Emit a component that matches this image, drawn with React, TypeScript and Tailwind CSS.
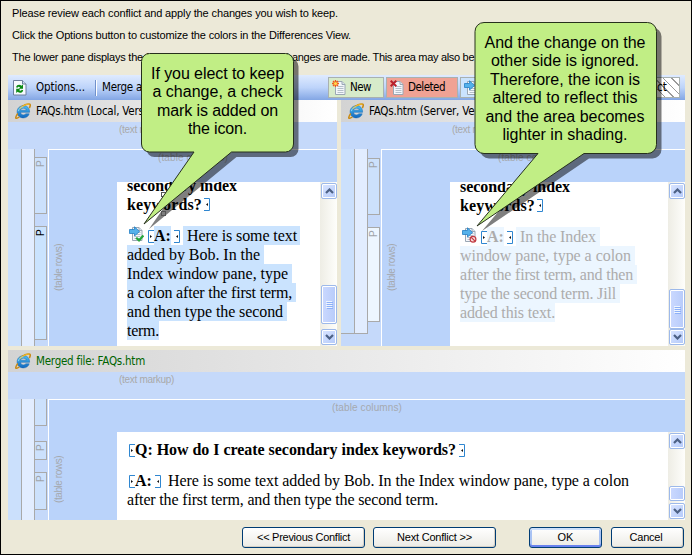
import React, { useLayoutEffect, useRef, useState } from "react";

const TAHOMA = "font-['DejaVu_Sans_Condensed','DejaVu_Sans',sans-serif] text-[11.5px]";
const ARIAL = "font-['Liberation_Sans',Arial,sans-serif]";

/** A run of text whose tracking is adjusted so that it spans `w` pixels. */
function Fit({ w, className = "", children }: { w: number; className?: string; children: string }) {
  const ref = useRef<HTMLSpanElement>(null);
  const [tracking, setTracking] = useState(0);
  useLayoutEffect(() => {
    const el = ref.current;
    if (el) setTracking((w - el.getBoundingClientRect().width) / children.length);
  }, []);
  return (
    <span ref={ref} className={`inline-block shrink-0 whitespace-pre ${className}`} style={{ letterSpacing: `${tracking}px` }}>
      {children}
    </span>
  );
}

function IELogo() {
  return (
    <svg width="16" height="16" viewBox="0 0 16 16" className="shrink-0">
      <defs>
        <linearGradient id="ie" x1="0" y1="0" x2="0" y2="1">
          <stop offset="0" stopColor="#4cc0f4" />
          <stop offset="1" stopColor="#1166bd" />
        </linearGradient>
      </defs>
      <path
        d="M14.600 9.300H5.600c.2 1.800 1.400 2.600 2.900 2.600 1.100 0 1.800-.4 2.300-1.100h3.400c-.8 2.600-2.900 4.100-5.700 4.100-3.800 0-6.400-2.400-6.400-6 0-3.700 2.700-6.200 6.400-6.200 3.900 0 6.300 2.700 6.100 6.600zM11.200 7.200C11.100 5.900 10 5.200 8.500 5.200S5.900 5.900 5.600 7.200z"
        fill="url(#ie)" stroke="#1769b4" strokeWidth=".5"
      />
      <path d="M2.800 10.500C.5 13.600.2 15.500 1.500 15.300c.7-.1 1.800-.7 3-1.600" fill="none" stroke="#c98a14" strokeWidth="1.400" />
      <path d="M4.500 5.800C8 2.300 13 .200 14.700 1.200c.9.600.6 2-.4 3.800" fill="none" stroke="#c98a14" strokeWidth="1.600" />
      <path d="M4.800 5.500C8 2.500 12.700.600 14.400 1.300" fill="none" stroke="#fbc62c" strokeWidth="1" />
      <path d="M3.300 8.200C4 5.500 6 3.900 8.500 3.800" fill="none" stroke="#8fdcfb" strokeWidth=".9" />
    </svg>
  );
}

function RefreshPage() {
  return (
    <svg width="14" height="16" viewBox="0 0 14 16" className="shrink-0">
      <path d="M.5 .5h9l3.500 3.500v11H.5z" fill="#f6f9ff" stroke="#6d7f9e" />
      <path d="M9.500 .5V4H13" fill="#cfdcf2" stroke="#6d7f9e" />
      <path d="M3 7.200c.8-3 4-3.200 5.500-1.400L10 4.500v4.300H5.700l1.400-1.300C6.200 6.400 4.900 6.500 4.500 7.700z" fill="#0c8a14" />
      <path d="M10.200 10.300c-.8 3-4 3.200-5.500 1.400L3.200 13V8.700h4.300L6.100 10c.9 1.100 2.200 1 2.600-.2z" fill="#0c8a14" />
    </svg>
  );
}

type Mark = "new" | "deleted" | "arrow" | "check" | "ignored";

function PageIcon({ mark }: { mark: Mark }) {
  const arrow = mark === "arrow" || mark === "check" || mark === "ignored";
  return (
    <svg width="15" height="16" viewBox="0 0 15 16" className="shrink-0">
      <path d="M3.500 1.500h6.500l3 3v10H3.500z" fill="#f4f7fb" stroke="#9aa7b4" />
      <path d="M10 1.500v3h3" fill="#dbe3ec" stroke="#9aa7b4" />
      <path d="M5.500 6.500h6M5.500 8.500h6M5.500 10.500h6M5.500 12.500h6" stroke="#b4bfca" />
      {mark === "new" && (
        <g>
          <path d="M3.500 0v7M0 3.500h7M1 1l5 5M6 1L1 6" stroke="#ef5b17" strokeWidth="1.300" />
          <circle cx="3.500" cy="3.500" r="1.600" fill="#ffd84a" />
        </g>
      )}
      {mark === "deleted" && <path d="M.7 .8l5.600 5.400M6.300 .8L.7 6.200" stroke="#b91f2b" strokeWidth="2" />}
      {arrow && <path d="M.5 3.500h5V.8L10.500 5.500 5.500 10V7.500h-5z" fill="#55b1ea" stroke="#247fc4" strokeWidth=".8" />}
      {mark === "check" && <path d="M7.200 11.700l2.800 2.700 4.400-5" fill="none" stroke="#25a63a" strokeWidth="2.200" />}
      {mark === "ignored" && (
        <g fill="#f7dede" stroke="#c23a41" strokeWidth="1.200">
          <circle cx="11" cy="12.200" r="2.900" />
          <path d="M9 10.200l4 4" />
        </g>
      )}
    </svg>
  );
}

/** Blue bracket that marks the start or the end of an element. */
function Tag({ end = false, className = "" }: { end?: boolean; className?: string }) {
  return (
    <svg width="6" height="13" viewBox="0 0 6 13" className={`mt-[4px] shrink-0 ${className}`}>
      <path d={end ? "M0 .5h5.500v12H0" : "M6 .5H.5v12H6"} fill="none" stroke="#2f86d0" />
      <path d={end ? "M4 5v3L2 6.500z" : "M2 5v3L4 6.500z"} fill="#111" />
    </svg>
  );
}

function Arrow({ down = false }: { down?: boolean }) {
  return (
    <div className="flex h-[16px] w-[16px] shrink-0 items-center justify-center rounded-[2px] border border-[#9db9ea] bg-linear-to-br from-[#dbe6ff] to-[#b3c9fa] shadow-[inset_0_0_0_1px_#fff]">
      <svg width="9" height="6" viewBox="0 0 9 6">
        <path d={down ? "M1 1l3.500 3.500L8 1" : "M1 5l3.500-3.500L8 5"} fill="none" stroke="#4d6185" strokeWidth="2.200" />
      </svg>
    </div>
  );
}

function ScrollBar({ before, thumb }: { before: string; thumb: string }) {
  return (
    <div className="flex w-[17px] shrink-0 flex-col items-end bg-linear-to-r from-[#eeede5] to-[#fefefb] pt-px pb-px">
      <Arrow />
      <div className={before} />
      <div className={`flex w-[16px] shrink-0 flex-col items-center justify-center gap-px rounded-[2px] border border-[#9db9ea] bg-linear-to-r from-[#cbd9ff] to-[#b7cbfa] shadow-[inset_0_0_0_1px_#fff] ${thumb}`}>
        {thumb !== "h-[15px]" && [0, 1, 2, 3].map((i) => <div key={i} className="h-px w-[6px] bg-[#eef4fe] shadow-[1px_1px_0_#8cb0f8]" />)}
      </div>
      <div className="grow" />
      <Arrow down />
    </div>
  );
}

function PaneHeader({ title, w, green = false }: { title: string; w: number; green?: boolean }) {
  return (
    <div className={`flex h-[22px] shrink-0 items-center bg-linear-to-r from-[#d3d3d3] to-white pl-[7px] ${TAHOMA} ${green ? "text-[#006400]" : "text-black"}`}>
      <IELogo />
      <Fit w={w} className="ml-[5px] pt-px leading-[21px]">{title}</Fit>
    </div>
  );
}

function Block({ h, p, tone = "bg-[#cce1fc]", ink = "text-[#a0a4aa]" }: { h: string; p?: boolean; tone?: string; ink?: string }) {
  return (
    <div className={`flex w-[13px] shrink-0 justify-center border border-[#a9a9a9] pt-[2px] ${tone} ${h}`}>
      {p && <span className={`h-[7px] rotate-180 text-[10px] leading-[11px] [writing-mode:vertical-rl] ${ARIAL} ${ink}`}>P</span>}
    </div>
  );
}

/** Structure gutters, the column ruler and the document of one file. */
function Structure({ blocks, rowsPad, colsPad, ended, scroll, children }: {
  blocks: React.ReactNode; rowsPad: string; colsPad: string; ended?: boolean; scroll: React.ReactNode; children: React.ReactNode;
}) {
  const cut = ended ? "h-[185px] border-b" : "h-full";
  return (
    <>
      <div className={`h-[27px] shrink-0 bg-[#c5d9fa] pl-[111px] text-[10px] leading-[15px] text-[#a9a9a9] ${ARIAL}`}>
        <Fit w={55}>(text markup)</Fit>
      </div>
      <div className="flex min-h-0 grow bg-[#c5d9fa]">
        <div className={`w-[14px] shrink-0 border-r border-[#a9a9a9] bg-[#cbe0fc] ${cut}`} />
        <div className={`w-[13px] shrink-0 border-r border-[#a9a9a9] bg-[#e2edff] ${cut}`} />
        <div className="-ml-px flex w-[14px] shrink-0 flex-col">{blocks}</div>
        <div className="flex min-w-0 grow flex-col border-t border-l border-white bg-[#bad3fa]">
          <div className={`h-[32px] shrink-0 text-[10px] leading-[16px] text-[#a5a9af] ${ARIAL} ${colsPad}`}>
            <Fit w={70}>(table columns)</Fit>
          </div>
          <div className="flex min-h-0 grow">
            <div className={`w-[68px] shrink-0 pl-[4px] text-[10px] leading-[11px] text-[#a5a9af] ${ARIAL} ${rowsPad}`}>
              <span className="block h-[47px] rotate-180 tracking-[-0.42px] whitespace-nowrap [writing-mode:vertical-rl]">(table rows)</span>
            </div>
            <div className="min-w-0 grow overflow-hidden bg-white pl-[10px] font-['Liberation_Serif','Times_New_Roman',serif] text-[16px] leading-[19px] text-black">{children}</div>
            {scroll}
          </div>
        </div>
      </div>
    </>
  );
}

function Marked({ w, hl, tone, children }: { w: number; hl: string; tone: string; children: string }) {
  return (
    <div className={`h-[19px] ${tone} ${hl}`}>
      <Fit w={w}>{children}</Fit>
    </div>
  );
}

function LegendBox({ mark, w, className, children }: { mark: Mark; w: number; className: string; children: string }) {
  return (
    <div className={`flex h-[21px] shrink-0 items-center border border-[#a9b1b0] pl-[3px] ${className}`}>
      <PageIcon mark={mark} />
      <Fit w={w} className="ml-[3px] pt-px">{children}</Fit>
    </div>
  );
}

function Button({ label, w, primary = false, className }: { label: string; w: number; primary?: boolean; className: string }) {
  return (
    <button className={`flex h-[21px] shrink-0 items-center justify-center rounded-[3px] border border-[#003c74] bg-linear-to-b from-white to-[#ecebe5] text-[11px] leading-[19px] text-black ${ARIAL} ${primary ? "shadow-[inset_0_2px_0_#cee0fb,inset_0_-2px_0_#6982ee,inset_2px_0_0_#a8c2f3,inset_-2px_0_0_#a8c2f3]" : "shadow-[inset_-1px_-1px_0_#d6d0c5]"} ${className}`}>
      <Fit w={w}>{label}</Fit>
    </button>
  );
}

const LEFT_TONE = "bg-[#cae3fe]";
const RIGHT_TONE = "bg-[#ecf6ff]";

export default function App() {
  return (
    <div className="relative flex h-[555px] w-[692px] flex-col overflow-hidden border border-black bg-[#ece9d8]">
      <div className={`mt-px flex h-[66px] shrink-0 flex-col pl-[11px] text-[11px] leading-[22px] text-black ${ARIAL}`}>
        <div className="h-[22px]"><Fit w={326}>Please review each conflict and apply the changes you wish to keep.</Fit></div>
        <div className="h-[22px]"><Fit w={339}>Click the Options button to customize the colors in the Differences View.</Fit></div>
        <div className="flex h-[22px]">
          <Fit w={131}>The lower pane displays the</Fit>
          <Fit w={138}> New merged file as overall </Fit>
          <Fit w={196}>changes are made. This area may also be </Fit>
          <Fit w={36}>edited.</Fit>
        </div>
      </div>

      <div className={`mt-[7px] ml-[7px] flex h-[25px] w-[677px] shrink-0 items-center bg-linear-to-b from-[#dfebff] via-[#bed4fa] to-[#83a6e4] pl-[5px] text-black ${TAHOMA}`}>
        <RefreshPage />
        <Fit w={49} className="ml-[9px] pt-px">Options...</Fit>
        <div className="ml-[10px] h-[16px] w-[2px] shrink-0 border-r border-white bg-[#7191cb]" />
        <Fit w={90} className="ml-[5px] pt-px">Merge all changes</Fit>
        <div className="ml-[136px] flex items-center gap-[2px]">
          <LegendBox mark="new" w={21} className="w-[56px] bg-[#d7ebca]">New</LegendBox>
          <LegendBox mark="deleted" w={37} className="w-[72px] bg-[#f0a294]">Deleted</LegendBox>
          <LegendBox mark="arrow" w={45} className="w-[84px] bg-[#cae3fe]">Changed</LegendBox>
          <div className="flex h-[21px] w-[134px] items-center justify-end border border-[#a9b1b0] bg-[repeating-linear-gradient(45deg,#fff_0px,#fff_5px,#9a9a9a_5px,#9a9a9a_6px)] pr-[12px]">
            <Fit w={40} className="pt-px">Conflict</Fit>
          </div>
        </div>
      </div>

      <div className="ml-[7px] flex h-[246px] w-[677px] shrink-0 gap-[4px]">
        <section className="flex w-[329px] shrink-0 flex-col">
          <PaneHeader title="FAQs.htm (Local, Version 2)" w={136} />
          <Structure
            colsPad="pl-[109px]"
            rowsPad="pt-[62px]"
            scroll={<ScrollBar before="h-[86px] shrink-0" thumb="h-[39px]" />}
            blocks={
              <>
                <div className="h-[8px] shrink-0" />
                <Block h="h-[57px]" p />
                <div className="h-[12px] shrink-0" />
                <Block h="h-[114px]" p tone="bg-[#cae3fe]" ink="text-black" />
              </>
            }
          >
            <div className="-mt-[6px] h-[19px] font-bold"><Fit w={110}>secondary index</Fit></div>
            <div className="flex h-[19px] font-bold"><Fit w={75}>keywords?</Fit><Tag end className="ml-[2px] -translate-y-px" /></div>
            <div className="mt-[12px] flex h-[19px]">
              <div className="w-[21px] shrink-0 pl-[2px]"><PageIcon mark="check" /></div>
              <Tag />
              <Fit w={17} className="bg-[#cae3fe] font-bold">A:</Fit>
              <Tag end className="mr-[3px] ml-[3px]" />
              <div className="h-[19px] w-[117px] bg-[#cae3fe] pl-[4px]"><Fit w={110}>Here is some text</Fit></div>
            </div>
            <Marked tone={LEFT_TONE} hl="w-[137px]" w={133}>added by Bob. In the</Marked>
            <Marked tone={LEFT_TONE} hl="w-[165px]" w={161}>Index window pane, type</Marked>
            <Marked tone={LEFT_TONE} hl="w-[169px]" w={165}>a colon after the first term,</Marked>
            <Marked tone={LEFT_TONE} hl="w-[160px]" w={156}>and then type the second</Marked>
            <Marked tone={LEFT_TONE} hl="w-[32px]" w={32}>term.</Marked>
          </Structure>
        </section>

        <section className="flex w-[344px] shrink-0 flex-col">
          <PaneHeader title="FAQs.htm (Server, Version 3)" w={143} />
          <Structure
            ended
            colsPad="pl-[116px]"
            rowsPad="pt-[62px]"
            scroll={<ScrollBar before="h-[90px] shrink-0" thumb="h-[40px]" />}
            blocks={
              <>
                <div className="h-[9px] shrink-0" />
                <Block h="h-[57px]" p />
                <div className="h-[12px] shrink-0" />
                <Block h="h-[95px]" p tone="bg-[#edf6ff]" />
              </>
            }
          >
            <div className="-mt-[5px] h-[19px] font-bold"><Fit w={110}>secondary index</Fit></div>
            <div className="flex h-[19px] font-bold"><Fit w={75}>keywords?</Fit><Tag end className="ml-[2px] -translate-y-px" /></div>
            <div className="mt-[12px] flex h-[19px] text-[#acacac]">
              <div className="w-[21px] shrink-0 pl-[2px]"><PageIcon mark="ignored" /></div>
              <Tag />
              <Fit w={17} className="bg-[#ecf6ff] font-bold">A:</Fit>
              <Tag end className="mr-[3px] ml-[3px]" />
              <div className="h-[19px] w-[84px] bg-[#ecf6ff] pl-[4px]"><Fit w={76}>In the Index</Fit></div>
            </div>
            <div className="text-[#acacac]">
              <Marked tone={RIGHT_TONE} hl="w-[175px]" w={171}>window pane, type a colon</Marked>
              <Marked tone={RIGHT_TONE} hl="w-[177px]" w={173}>after the first term, and then</Marked>
              <Marked tone={RIGHT_TONE} hl="w-[160px]" w={156}>type the second term. Jill</Marked>
              <Marked tone={RIGHT_TONE} hl="w-[95px]" w={95}>added this text.</Marked>
            </div>
          </Structure>
        </section>
      </div>

      <section className="mt-[4px] ml-[7px] flex h-[170px] w-[677px] shrink-0 flex-col">
        <PaneHeader title="Merged file: FAQs.htm" w={109} green />
        <Structure
          colsPad="pl-[283px]"
          rowsPad="pt-[24px]"
          scroll={<ScrollBar before="h-[37px] shrink-0" thumb="h-[15px]" />}
          blocks={
            <>
              <Block h="h-[27px] border-t-0" />
              <div className="h-[15px] shrink-0" />
              <Block h="h-[19px]" p />
              <div className="h-[12px] shrink-0" />
              <Block h="h-[38px]" p />
            </>
          }
        >
          <div className="mt-[8px] flex h-[19px] pl-[2px] font-bold">
            <Tag />
            <Fit w={321}>Q: How do I create secondary index keywords?</Fit>
            <Tag end className="ml-[3px]" />
          </div>
          <div className="mt-[12px] flex h-[19px] pl-[2px]">
            <Tag />
            <Fit w={17} className="font-bold">A:</Fit>
            <Tag end className="mr-[7px] ml-[3px]" />
            <Fit w={461}>Here is some text added by Bob. In the Index window pane, type a colon</Fit>
          </div>
          <div className="h-[19px]"><Fit w={311}>after the first term, and then type the second term.</Fit></div>
        </Structure>
      </section>

      <div className="mt-[7px] flex pl-[241px]">
        <Button label="<< Previous Conflict" w={93} className="w-[123px]" />
        <Button label="Next Conflict >>" w={75} className="ml-[8px] w-[123px]" />
        <Button label="OK" w={16} primary className="ml-[33px] w-[73px]" />
        <Button label="Cancel" w={33} className="ml-[9px] w-[73px] pr-[3px]" />
      </div>

      {/* Callouts floating over the dialog */}
      <svg width="692" height="555" viewBox="0 0 692 555" className="pointer-events-none absolute -top-px -left-px">
        <g fill="#000" fillOpacity=".5" transform="translate(5 5)">
          <path d="M149.500 53.500h136a8 8 0 0 1 8 8v82.500a8 8 0 0 1-8 8h-54L144 224l50-72h-44.500a8 8 0 0 1-8-8V61.500a8 8 0 0 1 8-8z" />
          <path d="M484 22.500h163.500a9 9 0 0 1 9 9v113a9 9 0 0 1-9 9H584L477 226l61-72.500h-54a9 9 0 0 1-9-9v-113a9 9 0 0 1 9-9z" />
        </g>
        <g fill="none" stroke="#555">
          <rect x="161.500" y="192.500" width="4" height="4" />
          <rect x="161.500" y="211.500" width="4" height="4" />
        </g>
        <g fill="#c1ee85" stroke="#26301c">
          <path d="M149.500 53.500h136a8 8 0 0 1 8 8v82.500a8 8 0 0 1-8 8h-54L144 224l50-72h-44.500a8 8 0 0 1-8-8V61.500a8 8 0 0 1 8-8z" />
          <path d="M484 22.500h163.500a9 9 0 0 1 9 9v113a9 9 0 0 1-9 9H584L477 226l61-72.500h-54a9 9 0 0 1-9-9v-113a9 9 0 0 1 9-9z" />
        </g>
      </svg>
      <div className={`absolute top-[64px] left-[140px] flex w-[153px] flex-col items-center text-[16px] leading-[18.400px] text-black ${ARIAL}`}>
        <Fit w={133}>If you elect to keep</Fit>
        <Fit w={130}>a change, a check</Fit>
        <Fit w={121}>mark is added on</Fit>
        <Fit w={59}>the icon.</Fit>
      </div>
      <div className={`absolute top-[33px] left-[473px] flex w-[182px] flex-col items-center text-[16px] leading-[18.400px] text-black ${ARIAL}`}>
        <Fit w={161}>And the change on the</Fit>
        <Fit w={148}>other side is ignored.</Fit>
        <Fit w={150}>Therefore, the icon is</Fit>
        <Fit w={145}>altered to reflect this</Fit>
        <Fit w={159}>and the area becomes</Fit>
        <Fit w={125}>lighter in shading.</Fit>
      </div>
    </div>
  );
}
